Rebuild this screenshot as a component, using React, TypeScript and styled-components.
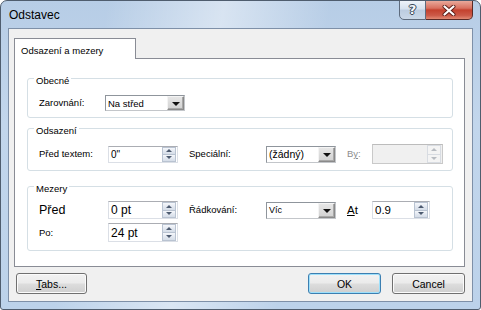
import styled, { createGlobalStyle, css } from 'styled-components'

const Global = createGlobalStyle`
  html, body { margin: 0; padding: 0; }
  body {
    width: 481px;
    height: 310px;
    overflow: hidden;
    background: #ffffff;
    font-family: "Liberation Sans", Arial, sans-serif;
    color: #000;
  }
`

const Frame = styled.div`
  box-sizing: border-box;
  width: 481px;
  height: 310px;
  border: 1px solid #4f5d6e;
  border-radius: 7px 7px 3px 3px;
  padding: 0 7px 7px;
  display: flex;
  flex-direction: column;
  background:
    linear-gradient(100deg, rgba(255,255,255,0) 20%, rgba(255,255,255,0.45) 42%, rgba(255,255,255,0) 62%),
    linear-gradient(to bottom, #b7cde6 0%, #c2d6ec 40%, #bcd2ea 100%);
  overflow: hidden;
`

const TitleBar = styled.div`
  height: 27px;
  display: flex;
  align-items: flex-start;
`

const Title = styled.div`
  margin: 7px 0 0 1px;
  font-size: 12px;
  line-height: 14px;
  flex: 1;
`

const CaptionButton = styled.div<{ $close?: boolean }>`
  box-sizing: border-box;
  margin-top: -1px;
  height: 20px;
  display: flex;
  align-items: center;
  justify-content: center;
  ${p => p.$close ? css`
    width: 47px;
    border: 1px solid #5a2a26;
    border-left: none;
    border-radius: 0 0 5px 0;
    background: linear-gradient(to bottom, #e9a99b 0%, #d8705f 40%, #c4412e 50%, #cc5a48 80%, #e28a74 100%);
  ` : css`
    width: 27px;
    border: 1px solid #5e6b7d;
    border-radius: 0 0 0 5px;
    background: linear-gradient(to bottom, #eef3f9 0%, #d5e1ee 45%, #bccce0 50%, #cad8e8 100%);
  `}
`

const Question = styled.span`
  font-family: "DejaVu Sans", sans-serif;
  font-size: 13px;
  font-weight: bold;
  line-height: 14px;
  color: #f4f7fb;
  text-shadow: 0 0 1px #3a4656, 1px 0 0 #3a4656, -1px 0 0 #3a4656, 0 1px 0 #3a4656, 0 -1px 0 #3a4656;
`

const Client = styled.div`
  flex: 1;
  display: flex;
  flex-direction: column;
  background: #f0f0f0;
  border: 1px solid #7e90a8;
  padding: 9px 7px 0 5px;
`

const TabStrip = styled.div`
  display: flex;
`

const Tab = styled.div`
  box-sizing: border-box;
  width: 122px;
  height: 21px;
  margin-bottom: -1px;
  position: relative;
  z-index: 1;
  background: #ffffff;
  border: 1px solid #898c95;
  border-bottom: none;
  padding: 6px 0 0 6px;
  font-size: 9.5px;
  line-height: 11px;
`

const Panel = styled.div`
  box-sizing: border-box;
  height: 209px;
  background: #ffffff;
  border: 1px solid #898c95;
  padding: 0 11px 0 12px;
  display: flex;
  flex-direction: column;
`

const Group = styled.div<{ $top: number; $h: number }>`
  box-sizing: border-box;
  margin-top: ${p => p.$top}px;
  height: ${p => p.$h}px;
  border: 1px solid #d5dfe5;
  border-radius: 3px;
  display: flex;
  flex-direction: column;
`

const Caption = styled.div`
  align-self: flex-start;
  margin: -4px 0 0 6px;
  padding: 0 2px;
  background: #ffffff;
  font-size: 9.5px;
  line-height: 11px;
`

const Fields = styled.div<{ $cols: string; $top: number }>`
  display: grid;
  grid-template-columns: ${p => p.$cols};
  align-items: center;
  row-gap: 4px;
  padding: ${p => p.$top}px 0 0 11px;
`

const Label = styled.div<{ $size?: number; $muted?: boolean }>`
  font-size: ${p => p.$size ?? 9.5}px;
  line-height: 14px;
  white-space: nowrap;
  color: ${p => (p.$muted ? '#8d8d8d' : '#000')};
  u { text-decoration: underline; }
`

const SpinBox = styled.div<{ $w: number; $h: number; $off?: boolean }>`
  box-sizing: border-box;
  width: ${p => p.$w}px;
  height: ${p => p.$h}px;
  display: flex;
  background: ${p => (p.$off ? '#f0f0f0' : '#ffffff')};
  border: 1px solid ${p => (p.$off ? '#c9c9c9' : '#dbdfe6')};
  border-top-color: ${p => (p.$off ? '#bcbcbc' : '#abadb3')};
`

const BoxText = styled.div<{ $size: number }>`
  flex: 1;
  display: flex;
  align-items: center;
  padding-left: 2px;
  font-size: ${p => p.$size}px;
  white-space: nowrap;
  overflow: hidden;
`

const SpinCol = styled.div`
  width: 14px;
  margin: 0 1px 0 0;
  display: flex;
  flex-direction: column;
`

const SpinHalf = styled.div<{ $up?: boolean; $off?: boolean }>`
  flex: 1;
  box-sizing: border-box;
  display: flex;
  align-items: center;
  justify-content: center;
  border: 1px solid ${p => (p.$off ? '#d8dce2' : '#b9c3d1')};
  ${p => (p.$up ? 'border-bottom: none;' : '')}
  background: ${p => (p.$off
    ? '#f4f4f4'
    : 'linear-gradient(to bottom, #f5f7fb 0%, #e4e9f1 50%, #d5dde8 100%)')};
  &::after {
    content: '';
    width: 0;
    height: 0;
    border-left: 3px solid transparent;
    border-right: 3px solid transparent;
    ${p => (p.$up
      ? `border-bottom: 3px solid ${p.$off ? '#b8bcc2' : '#4d5b70'};`
      : `border-top: 3px solid ${p.$off ? '#b8bcc2' : '#4d5b70'};`)}
  }
`

const ComboBox = styled.div<{ $w: number; $h: number }>`
  box-sizing: border-box;
  width: ${p => p.$w}px;
  height: ${p => p.$h}px;
  display: flex;
  background: #ffffff;
  border: 1px solid #8f959c;
  border-right-color: #c3c6ca;
  border-bottom-color: #c3c6ca;
`

const DropButton = styled.div`
  box-sizing: border-box;
  width: 17px;
  margin: 0;
  display: flex;
  align-items: center;
  justify-content: center;
  background: linear-gradient(to bottom, #e6e6e6 0%, #d2d2d2 100%);
  border: 1px solid #8a8a8a;
  border-top-color: #f4f4f4;
  border-left-color: #f4f4f4;
  box-shadow: inset -1px -1px 0 #a8a8a8;
  &::after {
    content: '';
    width: 0;
    height: 0;
    margin-top: 1px;
    border-left: 4px solid transparent;
    border-right: 4px solid transparent;
    border-top: 4px solid #111;
  }
`

const Footer = styled.div`
  display: flex;
  gap: 11px;
  margin-top: 6px;
  padding-left: 2px;
`

const Spacer = styled.div`
  flex: 1;
`

const Button = styled.div<{ $default?: boolean; $w: number }>`
  box-sizing: border-box;
  width: ${p => p.$w}px;
  height: 21px;
  display: flex;
  align-items: center;
  justify-content: center;
  font-size: 10.5px;
  border-radius: 3px;
  border: 1px solid ${p => (p.$default ? '#3c7fb1' : '#707070')};
  background: linear-gradient(to bottom, #f2f2f2 0%, #ebebeb 48%, #dddddd 52%, #cfcfcf 100%);
  box-shadow: inset 0 0 0 1px ${p => (p.$default ? '#9ee0fb' : '#fbfbfb')};
  u { text-decoration: underline; }
`

function Spinner({ w, h, value, size, off }: { w: number; h: number; value: string; size: number; off?: boolean }) {
  return (
    <SpinBox $w={w} $h={h} $off={off}>
      <BoxText $size={size}>{value}</BoxText>
      <SpinCol>
        <SpinHalf $up $off={off} />
        <SpinHalf $off={off} />
      </SpinCol>
    </SpinBox>
  )
}

function Combo({ w, h, value, size }: { w: number; h: number; value: string; size: number }) {
  return (
    <ComboBox $w={w} $h={h}>
      <BoxText $size={size}>{value}</BoxText>
      <DropButton />
    </ComboBox>
  )
}

const cols = '69px 81px 77px 81px 25px 71px'

export default function App() {
  return (
    <>
      <Global />
      <Frame>
        <TitleBar>
          <Title>Odstavec</Title>
          <CaptionButton>
            <Question>?</Question>
          </CaptionButton>
          <CaptionButton $close>
            <svg width="14" height="11" viewBox="0 0 14 11">
              <path d="M2.5 1.5 L11.5 9.5 M11.5 1.5 L2.5 9.5" stroke="#5b1e18" strokeWidth="4" strokeLinecap="round" />
              <path d="M2.5 1.5 L11.5 9.5 M11.5 1.5 L2.5 9.5" stroke="#ffffff" strokeWidth="2.2" strokeLinecap="round" />
            </svg>
          </CaptionButton>
        </TitleBar>
        <Client>
          <TabStrip>
            <Tab>Odsazení a mezery</Tab>
          </TabStrip>
          <Panel>
            <Group $top={19} $h={40}>
              <Caption>Obecné</Caption>
              <Fields $cols="66px 80px" $top={9}>
                <Label>Zarovnání:</Label>
                <Combo w={80} h={16} value="Na střed" size={9.5} />
              </Fields>
            </Group>
            <Group $top={10} $h={43}>
              <Caption>Odsazení</Caption>
              <Fields $cols={cols} $top={8}>
                <Label>Před textem:</Label>
                <Spinner w={70} h={17} value={'0"'} size={10} />
                <Label>Speciální:</Label>
                <Combo w={70} h={17} value="(žádný)" size={10.5} />
                <Label $muted>B<u>y</u>:</Label>
                <Spinner w={71} h={20} value="" size={10} off />
              </Fields>
            </Group>
            <Group $top={15} $h={65}>
              <Caption>Mezery</Caption>
              <Fields $cols={cols} $top={7}>
                <Label $size={12.5}>Před</Label>
                <Spinner w={70} h={18} value="0 pt" size={12} />
                <Label>Řádkování:</Label>
                <Combo w={70} h={17} value="Víc" size={9} />
                <Label $size={11.5}><u>A</u>t</Label>
                <Spinner w={58} h={18} value="0.9" size={11.5} />
                <Label>Po:</Label>
                <Spinner w={70} h={19} value="24 pt" size={12} />
              </Fields>
            </Group>
          </Panel>
          <Footer>
            <Button $w={71}><span><u>T</u>abs...</span></Button>
            <Spacer />
            <Button $w={73} $default>OK</Button>
            <Button $w={73}>Cancel</Button>
          </Footer>
        </Client>
      </Frame>
    </>
  )
}
